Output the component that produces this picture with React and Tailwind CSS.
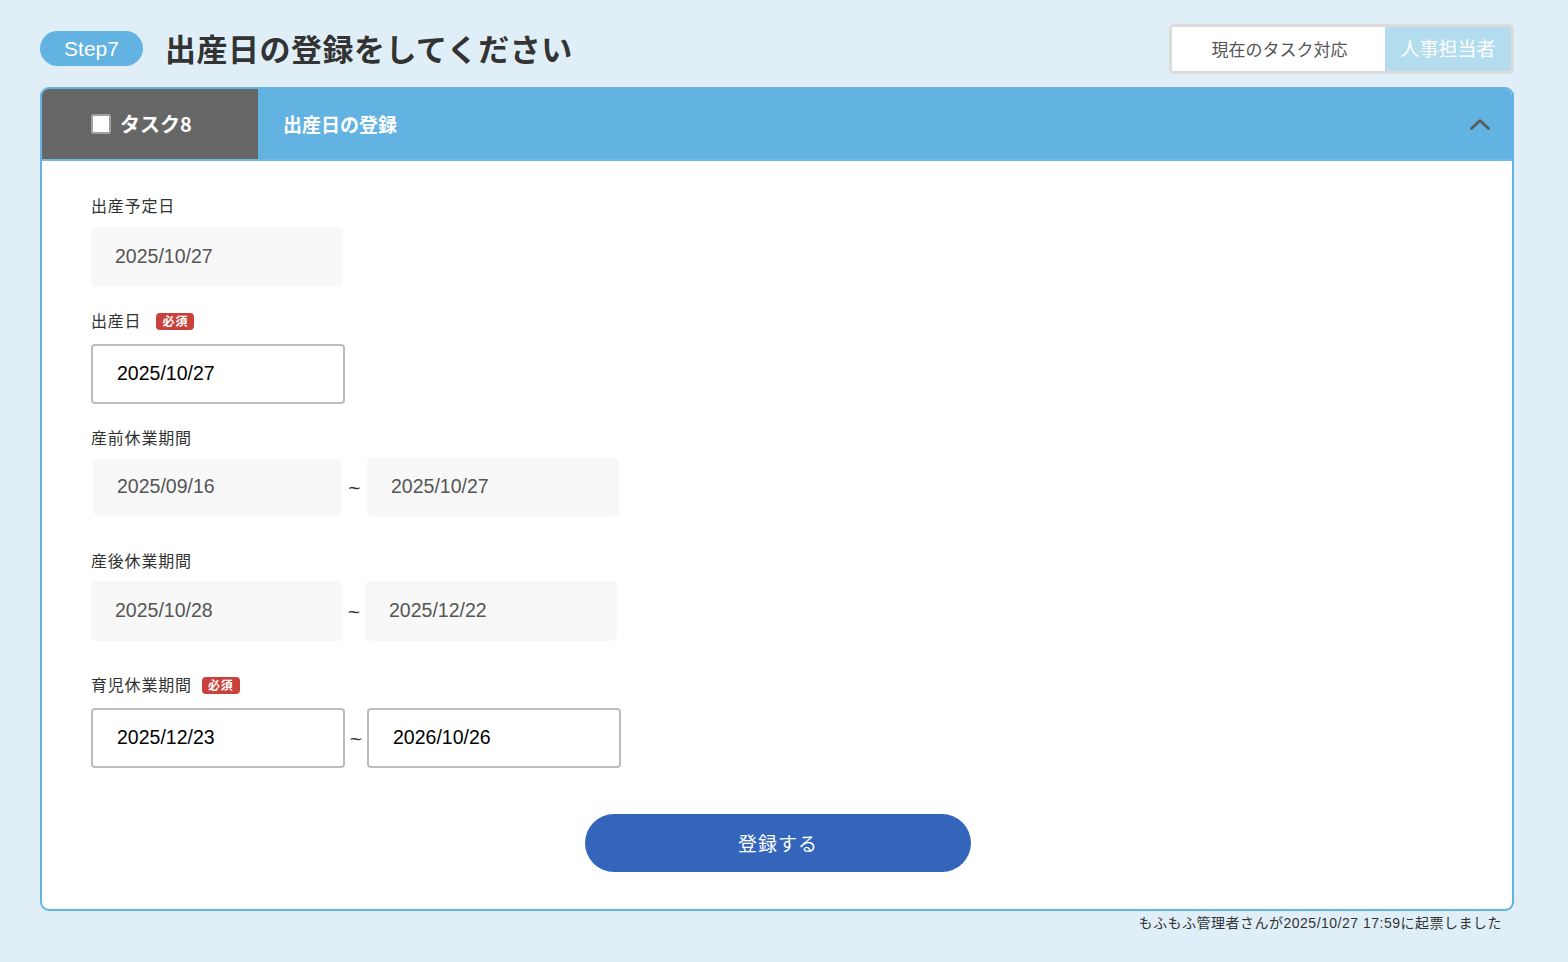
import React from "react";

const FONT = { fontFamily: '"Liberation Sans", "Noto Sans CJK JP", sans-serif' };
const JP = { fontFamily: '"Noto Sans CJK JP", "Liberation Sans", sans-serif' };

function Badge() {
  return (
    <span className="inline-flex items-center justify-center h-[17px] w-[38px] rounded-[4px] bg-[#c9413a] text-white text-[12px] font-bold leading-none" style={JP}>
      必須
    </span>
  );
}

function Label({ children, badge, badgeGap = "ml-4" }) {
  return (
    <div className="flex items-center h-5 text-[16px] tracking-[0.8px] text-[#333] leading-5" style={JP}>
      <span>{children}</span>
      {badge && <span className={badgeGap + " flex items-center pt-[2px]"}><Badge /></span>}
    </div>
  );
}

function ReadField({ value, w = 252, h = 60, ml = 0 }) {
  return (
    <div
      className="rounded-[5px] bg-[#f8f8f8] flex items-center pl-[24px] text-[19.5px] text-[#555]"
      style={{ ...FONT, width: w, height: h, marginLeft: ml }}
    >
      {value}
    </div>
  );
}

function EditField({ value }) {
  return (
    <div className="w-[254px] h-[60px] rounded-[4px] bg-white border-2 border-[#bcbcbc] flex items-center pl-[24px] text-[19.5px] text-black" style={FONT}>
      {value}
    </div>
  );
}

function Tilde({ w = 22 }) {
  return (
    <div className="text-center text-[21px] leading-none text-[#333]" style={{ ...FONT, width: w }}>
      ~
    </div>
  );
}

export default function App() {
  return (
    <div className="min-h-[962px] w-full bg-[#e0eff7]" style={JP}>
      <div className="w-[1474px] ml-[40px] pt-[24px]">
        {/* top row */}
        <div className="flex items-center justify-between h-[49px]">
          <div className="flex items-center">
            <div className="h-[35px] w-[103px] rounded-full bg-[#62b2e2] text-white text-[21px] flex items-center justify-center" style={FONT}>
              Step7
            </div>
            <h1 className="ml-[22px] text-[31px] font-bold text-[#333] tracking-[0.5px]" style={JP}>
              出産日の登録をしてください
            </h1>
          </div>
          <div className="flex h-[50px] rounded-[5px] border-[3px] border-[#dcdcdc] overflow-hidden">
            <div className="w-[213px] bg-white flex items-center justify-center text-[17px] text-[#555] pl-[2px]">
              現在のタスク対応
            </div>
            <div className="w-[126px] bg-[#b3ddef] flex items-center justify-center text-[19px] text-white">
              人事担当者
            </div>
          </div>
        </div>

        {/* card */}
        <div className="mt-[14px] rounded-[9px] border-2 border-[#62b2e2] bg-white overflow-hidden">
          <div className="flex h-[72px] bg-[#62b2e2] border-b-2 border-[#6cbbe6]">
            <div className="w-[216px] bg-[#666666] flex items-center pl-[49px]">
              <span className="w-[20px] h-[20px] bg-white border-2 border-[#a0a0a0] rounded-[2px]"></span>
              <span className="ml-[9px] text-[20px] font-bold text-white" style={JP}>タスク8</span>
            </div>
            <div className="flex-1 flex items-center justify-between pl-[25px] pr-[22px]">
              <span className="text-[19px] font-bold text-white" style={JP}>出産日の登録</span>
              <svg width="20" height="12" viewBox="0 0 20 12" fill="none">
                <path d="M1.5 10.5 L10 2.5 L18.5 10.5" stroke="#5a5a5a" strokeWidth="2.6" strokeLinecap="round" strokeLinejoin="round" />
              </svg>
            </div>
          </div>

          <div className="pl-[49px] pt-[34px] pb-[37px]">
            <Label>出産予定日</Label>
            <div className="mt-[12px]"><ReadField value="2025/10/27" /></div>

            <div className="mt-[23px]"><Label badge badgeGap="ml-[15px]">出産日</Label></div>
            <div className="mt-[14px]"><EditField value="2025/10/27" /></div>

            <div className="mt-[23px]"><Label>産前休業期間</Label></div>
            <div className="mt-[10px] flex items-center">
              <ReadField value="2025/09/16" w={249} h={57} ml={2} />
              <Tilde w={25} />
              <ReadField value="2025/10/27" />
            </div>

            <div className="mt-[33px]"><Label>産後休業期間</Label></div>
            <div className="mt-[11px] flex items-center">
              <ReadField value="2025/10/28" />
              <Tilde />
              <ReadField value="2025/12/22" />
            </div>

            <div className="mt-[33px]"><Label badge badgeGap="ml-[10px]">育児休業期間</Label></div>
            <div className="mt-[14px] flex items-center">
              <EditField value="2025/12/23" />
              <Tilde />
              <EditField value="2026/10/26" />
            </div>

            <div className="mt-[46px] flex justify-center pr-[47px]">
              <button className="w-[386px] h-[58px] rounded-full bg-[#3366bb] text-white text-[19px] tracking-[1px]" style={JP}>
                登録する
              </button>
            </div>
          </div>
        </div>

        <div className="mt-[2px] pr-[12px] text-right text-[14px] tracking-[0.5px] text-[#333]" style={FONT}>
          もふもふ管理者さんが2025/10/27 17:59に起票しました
        </div>
      </div>
    </div>
  );
}
